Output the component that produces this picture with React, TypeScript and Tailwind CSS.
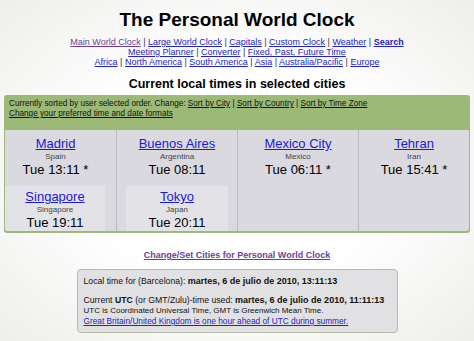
const cities = [
  { city: 'Madrid', country: 'Spain', time: 'Tue 13:11 *' },
  { city: 'Buenos Aires', country: 'Argentina', time: 'Tue 08:11' },
  { city: 'Mexico City', country: 'Mexico', time: 'Tue 06:11 *' },
  { city: 'Tehran', country: 'Iran', time: 'Tue 15:41 *' },
];

const second = [
  { city: 'Singapore', country: 'Singapore', time: 'Tue 19:11', box: 'ml-0 w-[100px]' },
  { city: 'Tokyo', country: 'Japan', time: 'Tue 20:11', box: 'ml-[9px] w-[102px]' },
];

function Sep() {
  return <span className="text-[#333]"> | </span>;
}

function NavLink({ children, visited }: { children: string; visited?: boolean }) {
  return (
    <a href="#" className={visited ? 'text-[#6b3f99] underline' : 'text-[#2222cc] underline'}>
      {children}
    </a>
  );
}

function CityCell({ city, country, time }: { city: string; country: string; time: string }) {
  return (
    <div className="flex flex-col items-center">
      <a href="#" className="text-[13px] leading-[15px] text-[#1a1adb] underline">
        {city}
      </a>
      <span className="mt-[1px] text-[8px] leading-[10px] text-[#444]">{country}</span>
      <span className="text-[13px] leading-[16px] text-black">{time}</span>
    </div>
  );
}

export default function App() {
  return (
    <div className="h-[341px] w-[474px] overflow-hidden bg-[radial-gradient(ellipse_at_center,#ffffff_45%,#eeeeec_100%)] font-['Liberation_Sans',Arial,sans-serif] text-black">
      <h1 className="pt-[8px] text-center text-[19px] font-bold leading-[24px]">The Personal World Clock</h1>

      <div className="mt-[5px] text-center text-[9px] leading-[10px]">
        <div>
          <NavLink visited>Main World Clock</NavLink>
          <Sep />
          <NavLink>Large World Clock</NavLink>
          <Sep />
          <NavLink>Capitals</NavLink>
          <Sep />
          <NavLink>Custom Clock</NavLink>
          <Sep />
          <NavLink>Weather</NavLink>
          <Sep />
          <a href="#" className="font-bold text-[#2222cc] underline">Search</a>
        </div>
        <div>
          <NavLink>Meeting Planner</NavLink>
          <Sep />
          <NavLink>Converter</NavLink>
          <Sep />
          <NavLink>Fixed, Past, Future Time</NavLink>
        </div>
        <div>
          <NavLink>Africa</NavLink>
          <Sep />
          <NavLink>North America</NavLink>
          <Sep />
          <NavLink>South America</NavLink>
          <Sep />
          <NavLink>Asia</NavLink>
          <Sep />
          <NavLink>Australia/Pacific</NavLink>
          <Sep />
          <NavLink>Europe</NavLink>
        </div>
      </div>

      <h2 className="mt-[9px] text-center text-[12.5px] font-bold leading-[16px]">Current local times in selected cities</h2>

      <div className="mx-[4px] mt-[3px] rounded-[3px] bg-[#9cb977] px-[1px] pb-[2px] pt-[4px]">
        <div className="px-[4px] text-[8.2px] leading-[10px] text-[#111]">
          <div>
            Currently sorted by user selected order. Change: <a href="#" className="underline">Sort by City</a>
            {' | '}
            <a href="#" className="underline">Sort by Country</a>
            {' | '}
            <a href="#" className="underline">Sort by Time Zone</a>
          </div>
          <a href="#" className="underline">Change your preferred time and date formats</a>
        </div>

        <div className="mt-[11px] grid h-[101px] grid-cols-[111px_121px_121px_1fr] overflow-hidden rounded-b-[3px] bg-[#d9d9df]">
          {cities.map((c, i) => (
            <div
              key={c.city}
              className={`flex flex-col pt-[6px] ${i > 0 ? 'border-l border-[#b9b9bf]' : 'pr-[10px]'}`}
            >
              <CityCell {...c} />
              {second[i] && (
                <div className={`mt-[8px] flex-1 bg-[#e3e3e7] pt-[3px] ${second[i].box}`}>
                  <CityCell city={second[i].city} country={second[i].country} time={second[i].time} />
                </div>
              )}
            </div>
          ))}
        </div>
      </div>

      <div className="mt-[17px] text-center text-[9px] font-bold leading-[11px]">
        <a href="#" className="text-[#6b3f99] underline">Change/Set Cities for Personal World Clock</a>
      </div>

      <div className="mx-auto mt-[8px] w-[321px] whitespace-nowrap rounded-[4px] border border-[#b7bda4] bg-[#e1e1e3] px-[6px] pb-[5px] pt-[6px] text-[8.7px] leading-[11px] text-[#111]">
        <div>
          Local time for (Barcelona): <b className="text-[9px]">martes, 6 de julio de 2010, 13:11:13</b>
        </div>
        <div className="mt-[8px]">
          Current <b>UTC</b> (or GMT/Zulu)-time used: <b className="text-[9px]">martes, 6 de julio de 2010, 11:11:13</b>
        </div>
        <div className="text-[8px] leading-[10px]">UTC is Coordinated Universal Time, GMT is Greenwich Mean Time.</div>
        <a href="#" className="block text-[8.3px] leading-[11px] text-[#2222cc] underline">
          Great Britain/United Kingdom is one hour ahead of UTC during summer.
        </a>
      </div>
    </div>
  );
}
